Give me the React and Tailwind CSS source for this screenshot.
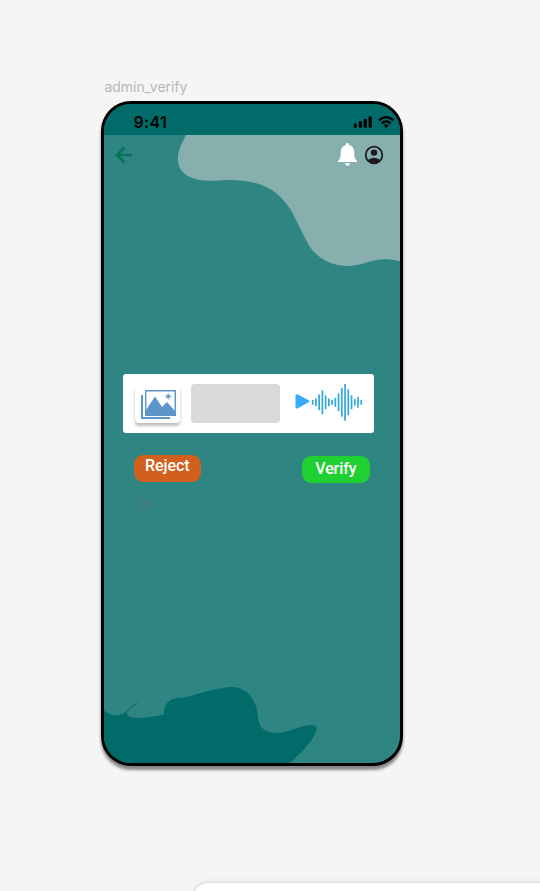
const bars = [5, 8, 16, 24, 14, 8, 5, 9, 18, 29, 37, 26, 14, 7, 11, 5];

function Waves() {
  return (
    <svg className="absolute inset-0 h-full w-full" viewBox="104 104 296 659" aria-hidden="true">
      <path
        fill="#86afae"
        d="M186 135C181 145 177.500 151 178 160C179 175 192 181 213 180.800C230 179.800 240 179 255 183C272 187 284 198 292 212L306 240C314 257 330 266 348 266C368 266 374 255 400 261.300V135Z"
      />
      <path
        fill="#006b68"
        d="M104 710.500C110 716 117 717 125 712.500C130 708 134 704 138 701.500C137 704 131 707.500 128 711C126 713 127 716 131 717.300C138 719 152 717 163.700 714.700C164 707 167 700 175 698.500C180 697.500 180 698.300 186 697C197 694.500 207 691 218 688.500C222 689.300 222 687.500 230 687C247 686 257 700 258 718C259 728 266 733 276 733C288 733 301 725 311 725C317 725 318 728 315 734C310 744 300 754 290 763H104Z"
      />
    </svg>
  );
}

function StatusBar() {
  return (
    <div className="flex h-[31px] items-center bg-[#006b68] pt-[5px] pl-[29.5px]">
      <span className="text-[16px] leading-none font-semibold tracking-[0.3px]">9:41</span>
      <svg className="ml-auto" width="49" height="16" viewBox="351 114 49 16" aria-hidden="true">
        <rect x="353.800" y="123.500" width="3.200" height="4.200" rx="1" />
        <rect x="358.800" y="121.300" width="3.200" height="6.400" rx="1" />
        <rect x="363.700" y="118.800" width="3.200" height="8.900" rx="1" />
        <rect x="368.600" y="116.300" width="3.200" height="11.400" rx="1" />
        <g fill="none" stroke="#000" strokeWidth="2.300">
          <path d="M378.800 120.500Q386.200 113.700 393.600 120.500" />
          <path d="M381.700 123.400Q386.200 119.300 390.700 123.400" />
        </g>
        <path d="M383.600 125.300Q386.200 123.100 388.800 125.300L386.200 127.900Z" />
      </svg>
    </div>
  );
}

function TopNav() {
  return (
    <div className="flex h-10 items-center justify-between pr-4 pl-[11px]">
      <svg width="17" height="18" viewBox="0 0 17 18" fill="none" stroke="#08735b" strokeWidth="2.600" aria-label="Back">
        <path d="M17 9H2M9.500 1.500L2 9L9.500 16.500" />
      </svg>
      <div className="flex items-center gap-[7px]">
        <svg className="mb-px" width="19" height="23" viewBox="0 0 19 23" fill="#fff" aria-label="Notifications">
          <path d="M8 2V1.200Q8 0 9.500 0T11 1.200V2C15.500 3 16.300 7 16.300 10.500C16.300 14.500 17 16 19 17.800V19H0V17.800C2 16 2.700 14.500 2.700 10.500C2.700 7 3.500 3 8 2ZM6.800 20.300H12.200Q11.700 23 9.500 23T6.800 20.300Z" />
        </svg>
        <svg width="20" height="20" viewBox="0 0 20 20" aria-label="Account">
          <circle cx="10" cy="10" r="8.300" fill="none" stroke="#1d1b20" strokeWidth="1.800" />
          <circle cx="10" cy="7.600" r="3.200" fill="#1d1b20" />
          <path fill="#1d1b20" d="M3.500 15.300Q6.300 12.800 10 12.800T16.500 15.300Q14 18.500 10 18.500T3.500 15.300Z" />
        </svg>
      </div>
    </div>
  );
}

function PhotoIcon() {
  return (
    <svg width="36" height="30" viewBox="0 0 36 30" fill="#5d94c9" aria-label="Image">
      <path d="M0 5H2V27H29V29H0Z" />
      <path fillRule="evenodd" d="M4 0H35V26H4ZM5.400 1.400V24.600H33.600V1.400Z" />
      <path d="M5 20L14 6.500L21 17L26 12L34 21V25H5Z" />
      <circle cx="27.300" cy="6.400" r="1.900" />
      <path
        fill="none"
        stroke="#5d94c9"
        strokeWidth=".7"
        strokeDasharray="1.200 4.600 1.200"
        d="M27.300 2.900V9.900M23.800 6.400H30.800M24.800 3.900L29.800 8.900M29.800 3.900L24.800 8.900"
      />
    </svg>
  );
}

function SubmissionCard() {
  return (
    <div className="ml-[19.300px] flex h-[59px] w-[251px] items-start rounded-[3px] bg-white pt-2.5">
      <div className="ml-3 flex h-[39px] w-[45px] items-center justify-center rounded-[4px] bg-white pt-[3px] pl-0.5 shadow-[0_3px_3px_rgba(0,0,0,0.25)]">
        <PhotoIcon />
      </div>
      <div className="ml-[10.500px] h-[39px] w-[89.500px] rounded-[4px] bg-[#d9d9d9]" />
      <svg className="ml-[14.400px] mt-[9.500px]" width="15" height="15" viewBox="0 0 15 15" fill="#38adff" aria-label="Play">
        <path d="M.5 2Q.5-.5 3 .6L14 6.500Q15.200 7.300 14 8L3 14.200Q.5 15.200.5 13Z" />
      </svg>
      <svg className="ml-px" width="54" height="39" viewBox="0 0 54 39" aria-label="Waveform">
        {bars.map((h, i) => (
          <rect key={i} x={0.8 + i * 3.24} y={18.3 - h / 2} width="1.700" height={h} rx=".6" fill="#2fa8dc" />
        ))}
      </svg>
    </div>
  );
}

export default function App() {
  return (
    <main className="flex h-[891px] w-[540px] flex-col overflow-hidden bg-[#f5f5f5] font-['Inter',sans-serif]">
      <h1 className="mt-[76.500px] ml-[104.500px] h-[24.500px] shrink-0 text-[14px] leading-5 font-normal tracking-[-0.05px] text-[#b8b8b8]">admin_verify</h1>
      <section className="relative ml-[101px] h-[665px] w-[302px] shrink-0 overflow-hidden rounded-[30px] border-[3px] border-black bg-[#2f8582] shadow-[0_4px_3px_rgba(0,0,0,0.45)]">
        <Waves />
        <div className="relative flex flex-col">
          <StatusBar />
          <TopNav />
          <div className="mt-[199px]">
            <SubmissionCard />
          </div>
          <div className="mt-[22px] mr-[30.400px] ml-[29.500px] flex justify-between font-['Roboto',sans-serif] text-[16px] font-medium tracking-[-0.1px] text-white">
            <button className="flex h-[26.500px] w-[67.500px] items-start justify-center rounded-[9px] bg-[#d15f1d] pt-0.5 leading-[18px]">Reject</button>
            <button className="mt-px flex h-[26.500px] w-[67.500px] items-center justify-center rounded-[9px] bg-[#1fd033] leading-[18px]">Verify</button>
          </div>
          <svg className="mt-[9px] ml-[34.500px]" width="15" height="18" viewBox="0 0 15 18" fill="#3d7f7d" aria-hidden="true">
            <path d="M1.500 8H13.500Q15 8 15 9.500V16Q15 17.500 13.500 17.500H1.500Q0 17.500 0 16V9.500Q0 8 1.500 8Z" />
            <path d="M3.500 8.500V5Q3.500 1.200 7.500 1.200T11.500 5V8.500" fill="none" stroke="#3d7f7d" strokeWidth="1.800" />
          </svg>
        </div>
      </section>
      <div className="mt-[116.500px] ml-[194px] h-16 w-[500px] shrink-0 rounded-t-[13px] bg-white shadow-[0_0_2px_rgba(0,0,0,0.3),0_0_10px_rgba(0,0,0,0.06)]" />
    </main>
  );
}
